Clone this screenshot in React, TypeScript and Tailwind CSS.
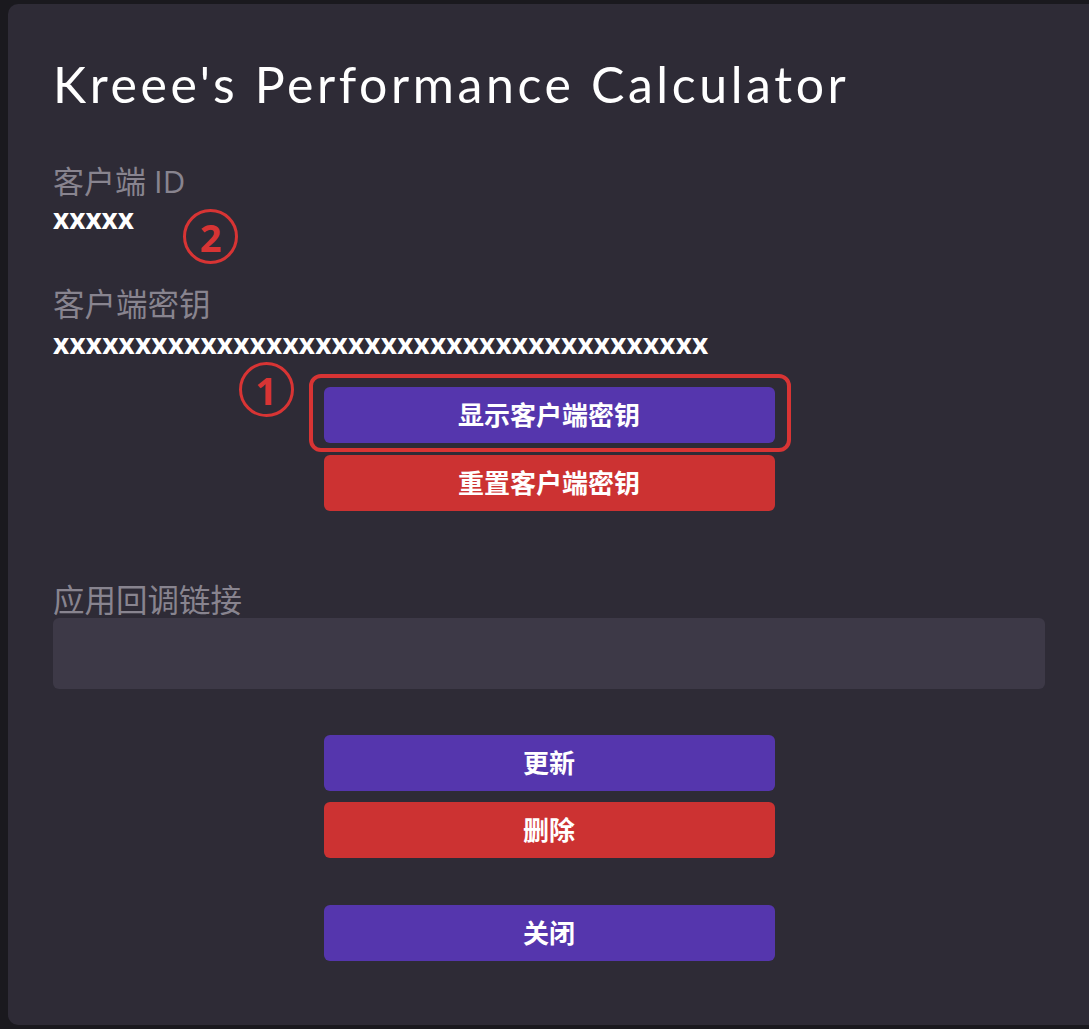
import React from "react";

const cjk = "font-['Open_Sans','Noto_Sans_CJK_SC',sans-serif]";

function Circled({ n }: { n: string }) {
    return (
        <div className="w-[55px] h-[55px] rounded-full border-[3px] border-[#d83434] flex items-center justify-center">
            <span className="text-[38px] leading-none font-bold text-[#d83434] font-['Noto_Sans',sans-serif]">{n}</span>
        </div>
    );
}

function Btn({ label, tone }: { label: string; tone: "purple" | "red" }) {
    return (
        <button
            className={`w-[451px] h-[56px] rounded-[6px] text-white text-[26px] font-bold ${cjk} ${
                tone === "purple" ? "bg-[#5536ad]" : "bg-[#cc3232]"
            }`}
        >
            {label}
        </button>
    );
}

export default function App() {
    return (
        <div className="w-[1089px] h-[1029px] bg-[#1a191e] overflow-hidden pt-[4px] pl-[8px]">
            <div className="w-[1100px] h-[1021px] rounded-[10px] bg-[#2e2b36] pl-[45px] pt-[50px] flex flex-col">
                <h1 className="text-[50px] leading-[60px] text-white font-['Lato',sans-serif] font-normal tracking-[3.6px]">
                    Kreee's Performance Calculator
                </h1>

                <div className="mt-[49px] flex flex-col">
                    <span className={`text-[31px] leading-[36px] text-[#88848f] font-normal ${cjk}`}>客户端 ID</span>
                    <div className="relative mt-[2px]">
                        <span className={`text-[28px] leading-[34px] text-white font-bold ${cjk}`}>xxxxx</span>
                        <div className="absolute left-[130px] top-[8px]">
                            <Circled n="2" />
                        </div>
                    </div>
                </div>

                <div className="mt-[51px] flex flex-col">
                    <span className={`text-[31.5px] leading-[36px] text-[#88848f] font-normal ${cjk}`}>客户端密钥</span>
                    <span className={`mt-[4px] text-[28px] leading-[34px] text-white font-bold tracking-[0.2px] ${cjk}`}>
                        xxxxxxxxxxxxxxxxxxxxxxxxxxxxxxxxxxxxxxxx
                    </span>
                </div>

                <div className="w-[992px] flex flex-col items-center mt-[27px]">
                    <div className="relative">
                        <div className="absolute left-[-85px] top-[-25px]">
                            <Circled n="1" />
                        </div>
                        <div className="absolute left-[-15px] right-[-16px] top-[-13px] bottom-[-9px] rounded-[12px] border-[4px] border-[#d83434]" />
                        <Btn label="显示客户端密钥" tone="purple" />
                    </div>
                    <div className="mt-[12px]">
                        <Btn label="重置客户端密钥" tone="red" />
                    </div>
                </div>

                <div className="mt-[70px] flex flex-col">
                    <span className={`text-[31.5px] leading-[38px] text-[#88848f] font-normal ${cjk}`}>应用回调链接</span>
                    <div className="mt-[-1px] w-[992px] h-[71px] rounded-[6px] bg-[#3d3947]" />
                </div>

                <div className="w-[992px] flex flex-col items-center mt-[46px] gap-[11px]">
                    <Btn label="更新" tone="purple" />
                    <Btn label="删除" tone="red" />
                    <div className="mt-[36px]">
                        <Btn label="关闭" tone="purple" />
                    </div>
                </div>
            </div>
        </div>
    );
}
